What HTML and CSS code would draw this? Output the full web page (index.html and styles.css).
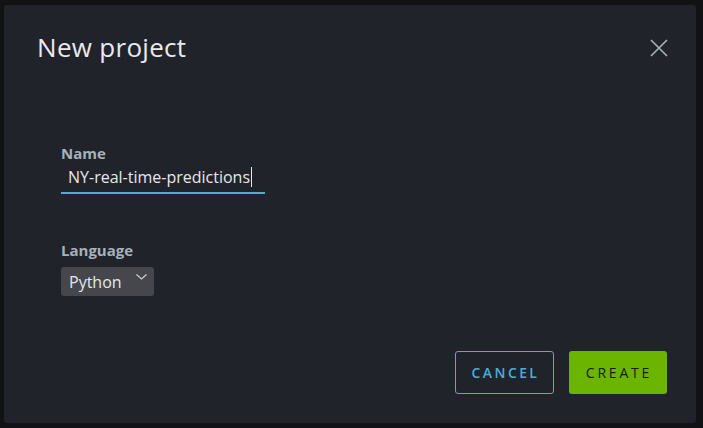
FILE: index.html
```html
<!DOCTYPE html>
<html>
<head>
<meta charset="utf-8">
<link rel="stylesheet" href="styles.css">
</head>
<body>
<div class="modal">
  <div class="modal-header">
    <h3 class="modal-title">New project</h3>
    <button class="close" aria-label="Close">
      <svg width="18" height="18" viewBox="0 0 18 18"><path d="M1 1 L17 17 M17 1 L1 17" stroke="#a9b4bd" stroke-width="1.6" fill="none"/></svg>
    </button>
  </div>
  <div class="modal-body">
    <div class="field">
      <label class="label">Name</label>
      <div class="input">NY-real-time-predictions<span class="caret"></span></div>
    </div>
    <div class="field field-lang">
      <label class="label">Language</label>
      <div class="select">Python
        <svg class="chev" width="11" height="6" viewBox="0 0 11 6"><path d="M0.5 0.5 L5.5 5 L10.5 0.5" stroke="#c9cdd2" stroke-width="1.3" fill="none"/></svg>
      </div>
    </div>
  </div>
  <div class="modal-footer">
    <button class="btn btn-outline">CANCEL</button>
    <button class="btn btn-success">CREATE</button>
  </div>
</div>
</body>
</html>
```

FILE: styles.css
```css
html, body {
  margin: 0;
  padding: 0;
  background: #111215;
  width: 703px;
  height: 428px;
  overflow: hidden;
  font-family: "Open Sans", "Liberation Sans", sans-serif;
}
.modal {
  margin: 5px 0 0 4px;
  width: 692px;
  height: 418px;
  background: #21232a;
  border-radius: 3px;
  box-sizing: border-box;
  display: flex;
  flex-direction: column;
}
.modal-header {
  display: flex;
  justify-content: space-between;
  align-items: flex-start;
  padding: 24px 28px 0 33px;
}
.modal-title {
  margin: 0;
  font-weight: 400;
  font-size: 26px;
  line-height: 36px;
  color: #e8eaed;
  letter-spacing: 0.3px;
}
.close {
  background: none;
  border: 0;
  padding: 0;
  margin-top: 10px;
  width: 18px;
  height: 18px;
  display: flex;
}
.modal-body {
  padding: 79px 0 0 57px;
  flex: 1;
}
.field {
  display: flex;
  flex-direction: column;
  align-items: flex-start;
}
.label {
  font-size: 15px;
  font-weight: 700;
  color: #a6b1bb;
  line-height: 18px;
}
.input {
  margin-top: 4px;
  width: 204px;
  box-sizing: border-box;
  padding: 0 0 4px 7px;
  font-size: 16px;
  line-height: 22px;
  color: #e6e8eb;
  border-bottom: 2px solid #4aaed9;
  display: flex;
  align-items: center;
}
.caret {
  display: inline-block;
  width: 1px;
  height: 20px;
  background: #e6e8eb;
  margin-left: 1px;
}
.field-lang {
  margin-top: 47px;
}
.select {
  margin-top: 8px;
  width: 93px;
  height: 29px;
  box-sizing: border-box;
  background: #45474d;
  border-radius: 3px;
  padding: 1px 0 0 8px;
  font-size: 16px;
  line-height: 29px;
  color: #e6e8eb;
  position: relative;
}
.chev {
  position: absolute;
  right: 7px;
  top: 7px;
}
.modal-footer {
  display: flex;
  justify-content: flex-end;
  gap: 15px;
  padding: 0 29px 29px 0;
}
.btn {
  width: 99px;
  height: 43px;
  box-sizing: border-box;
  border-radius: 3px;
  font-family: "Open Sans", "Liberation Sans", sans-serif;
  font-size: 14px;
  font-weight: 600;
  letter-spacing: 2.4px;
  padding: 0 0 0 2px;
}
.btn-outline {
  background: transparent;
  border: 1px solid #4aaed9;
  color: #4aaed9;
}
.btn-success {
  width: 98px;
  background: #6bb400;
  border: 0;
  color: #14200c;
  font-weight: 400;
  letter-spacing: 2.8px;
}
</style>
```
